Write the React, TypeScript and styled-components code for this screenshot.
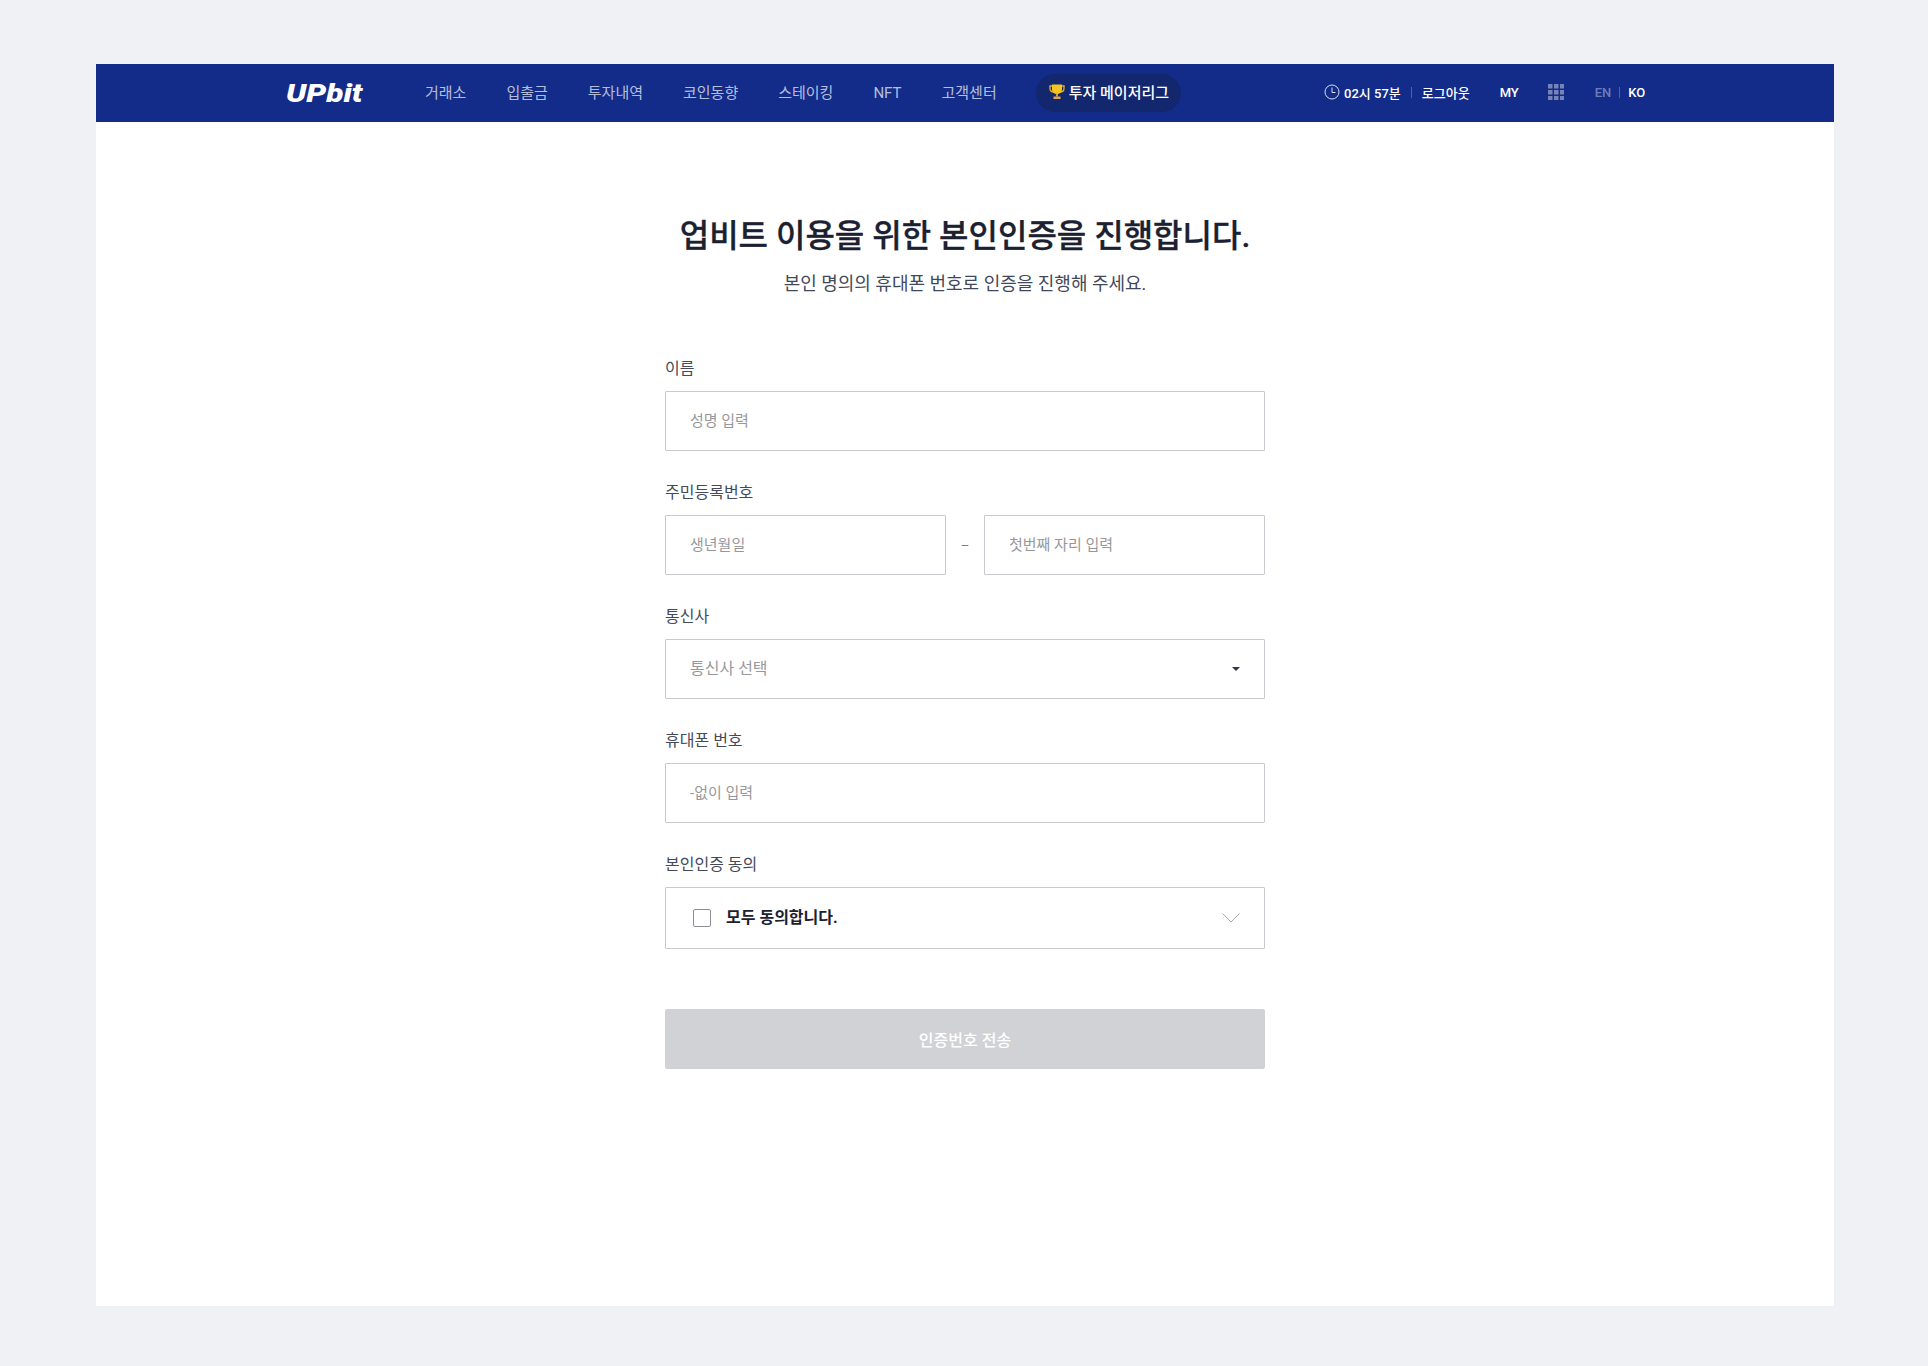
import React from "react";
import styled, { createGlobalStyle } from "styled-components";

const GlobalStyle = createGlobalStyle`
  html, body {
    margin: 0;
    padding: 0;
    background: #eff1f5;
    font-family: Roboto, "Noto Sans CJK KR", sans-serif;
    color: #1b2130;
  }
  * { box-sizing: border-box; }
`;

const Page = styled.div`
  width: 1928px;
  height: 1366px;
  padding: 64px 94px 60px 96px;
`;

const Panel = styled.div`
  display: flex;
  flex-direction: column;
  height: 100%;
  background: #fff;
`;

const Header = styled.header`
  display: flex;
  align-items: center;
  height: 58px;
  padding-left: 190px;
  background: #132c89;
`;

const Logo = styled.span`
  width: 80px;
  margin-right: 59px;
  color: #fff;
  font-size: 25px;
  font-weight: 900;
  font-style: italic;
  transform: scaleX(1.26);
  transform-origin: left center;
`;

const Nav = styled.nav`
  display: flex;
  align-items: center;
  gap: 40px;
  padding-bottom: 1px;
`;

const NavLink = styled.a`
  color: rgba(255, 255, 255, 0.7);
  font-size: 15px;
  line-height: 20px;
`;

const Pill = styled.a`
  display: flex;
  align-items: center;
  gap: 3px;
  height: 38px;
  margin-left: 39px;
  padding: 0 12px 3px;
  border-radius: 19px;
  background: #12276e;
  color: #fff;
  font-size: 15px;
  font-weight: 500;
`;

const Utility = styled.div`
  display: flex;
  align-items: center;
  margin-left: 143px;
  padding-bottom: 2px;
  color: #fff;
  font-size: 13px;
  font-weight: 500;
`;

const Time = styled.span`
  display: flex;
  align-items: center;
  gap: 4px;
`;

const Divider = styled.i<{ $space: number }>`
  width: 1px;
  height: 11px;
  margin: ${(p) => `0 ${p.$space}px`};
  background: rgba(255, 255, 255, 0.25);
`;

const My = styled.span`
  margin: 0 29px 0 30px;
`;

const Lang = styled.span<{ $off?: boolean }>`
  color: ${(p) => (p.$off ? "rgba(255, 255, 255, 0.4)" : "#fff")};
`;

const Apps = styled.svg`
  margin-right: 31px;
`;

const Main = styled.main`
  display: flex;
  flex-direction: column;
  align-items: center;
  padding-top: 91px;
`;

const Title = styled.h1`
  margin: 0;
  color: #1b2130;
  font-size: 32px;
  font-weight: 500;
  line-height: 46px;
  -webkit-text-stroke: 0.3px #1b2130;
`;

const Sub = styled.p`
  margin: 13px 0 0;
  color: #42485a;
  font-size: 18px;
  line-height: 24px;
`;

const Form = styled.form`
  display: flex;
  flex-direction: column;
  width: 600px;
  margin-top: 51px;
`;

const Field = styled.div`
  display: flex;
  flex-direction: column;
  margin-bottom: 20px;
`;

const Label = styled.label`
  height: 44px;
  padding-top: 11px;
  color: #444a5a;
  font-size: 16px;
  line-height: 22px;
`;

const Input = styled.div<{ $select?: boolean }>`
  display: flex;
  align-items: center;
  justify-content: space-between;
  height: 60px;
  padding: 0 24px 4px;
  border: 1px solid #c8cacf;
  border-radius: 1px;
  color: #97989c;
  font-size: ${(p) => (p.$select ? 16 : 15)}px;
`;

const Pair = styled.div`
  display: flex;
  align-items: center;

  ${Input} {
    flex: 1;
  }
`;

const Dash = styled.span`
  width: 38px;
  color: #777b86;
  font-size: 13px;
  text-align: center;
`;

const Caret = styled.i`
  margin: 4px 0 0;
  border-top: 4px solid #333845;
  border-left: 4px solid transparent;
  border-right: 4px solid transparent;
`;

const Agree = styled.div`
  display: flex;
  align-items: center;
  height: 62px;
  padding: 0 24px 0 27px;
  border: 1px solid #c8cacf;
  border-radius: 1px;
`;

const Check = styled.i`
  width: 18px;
  height: 18px;
  margin-right: 15px;
  border: 1.5px solid #8b8e97;
  border-radius: 2px;
`;

const AgreeText = styled.strong`
  flex: 1;
  padding-bottom: 4px;
  color: #1b2130;
  font-size: 16px;
  font-weight: 700;
`;

const Submit = styled.button`
  height: 60px;
  margin-top: 40px;
  padding: 0 0 1px;
  border: 0;
  border-radius: 2px;
  background: #d0d2d6;
  color: #fff;
  font-family: inherit;
  font-size: 16px;
  font-weight: 500;
`;

const Trophy = () => (
  <svg width="18" height="18" viewBox="0 0 18 18">
    <path d="M4 3H2v2.500C2 8 4 9 6 9M14 3h2v2.500C16 8 14 9 12 9" fill="none" stroke="#e0a92a" strokeWidth="1.4" />
    <path d="M4 1.500h10V6c0 3.200-2.400 5-5 5s-5-1.800-5-5z" fill="#f4c51f" />
    <path d="M8 10.500h2v3H8z" fill="#d99a26" />
    <path d="M5.500 13.500h7V16h-7z" fill="#e0a44a" />
  </svg>
);

const Clock = () => (
  <svg width="16" height="16" viewBox="0 0 16 16" fill="none" stroke="#d7dcec" strokeWidth="1">
    <circle cx="8" cy="8" r="7" />
    <path d="M8 3.500V8.500H11.500" />
  </svg>
);

const AppsIcon = () => (
  <Apps width="16" height="16" viewBox="0 0 16 16" fill="#7683b8">
    {[0, 6, 12].map((y) =>
      [0, 6, 12].map((x) => <rect key={`${x}-${y}`} x={x} y={y} width="4.500" height="4.500" />)
    )}
  </Apps>
);

const Chevron = () => (
  <svg width="18" height="10" viewBox="0 0 18 10" fill="none" stroke="#a5a8af" strokeWidth="1">
    <path d="M.5.500 9 9l8.500-8.500" />
  </svg>
);

const App = () => {
  return (
    <Page>
      <GlobalStyle />
      <Panel>
        <Header>
          <Logo>UPbit</Logo>
          <Nav>
            {["거래소", "입출금", "투자내역", "코인동향", "스테이킹", "NFT", "고객센터"].map((item) => (
              <NavLink key={item}>{item}</NavLink>
            ))}
          </Nav>
          <Pill>
            <Trophy />
            투자 메이저리그
          </Pill>
          <Utility>
            <Time>
              <Clock />
              02시 57분
            </Time>
            <Divider $space={10} />
            <span>로그아웃</span>
            <My>MY</My>
            <AppsIcon />
            <Lang $off>EN</Lang>
            <Divider $space={8} />
            <Lang>KO</Lang>
          </Utility>
        </Header>
        <Main>
          <Title>업비트 이용을 위한 본인인증을 진행합니다.</Title>
          <Sub>본인 명의의 휴대폰 번호로 인증을 진행해 주세요.</Sub>
          <Form>
            <Field>
              <Label>이름</Label>
              <Input>성명 입력</Input>
            </Field>
            <Field>
              <Label>주민등록번호</Label>
              <Pair>
                <Input>생년월일</Input>
                <Dash>–</Dash>
                <Input>첫번째 자리 입력</Input>
              </Pair>
            </Field>
            <Field>
              <Label>통신사</Label>
              <Input $select>
                통신사 선택
                <Caret />
              </Input>
            </Field>
            <Field>
              <Label>휴대폰 번호</Label>
              <Input>-없이 입력</Input>
            </Field>
            <Field>
              <Label>본인인증 동의</Label>
              <Agree>
                <Check />
                <AgreeText>모두 동의합니다.</AgreeText>
                <Chevron />
              </Agree>
            </Field>
            <Submit type="button">인증번호 전송</Submit>
          </Form>
        </Main>
      </Panel>
    </Page>
  );
};

export default App;
